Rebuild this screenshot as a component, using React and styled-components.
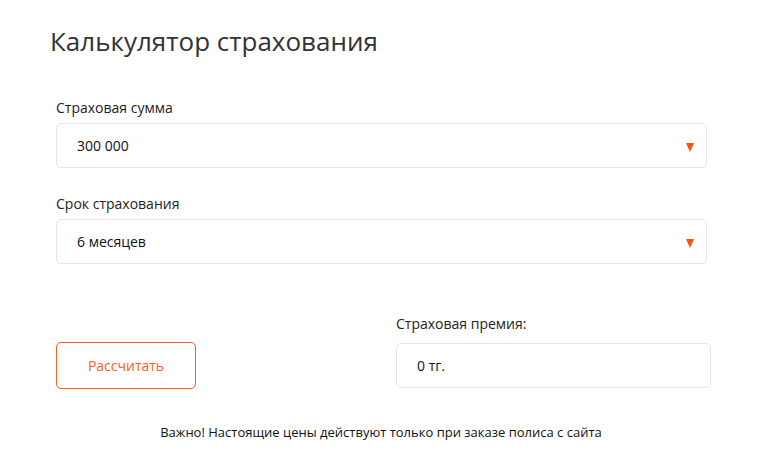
import React from "react";
import styled, { createGlobalStyle } from "styled-components";

const Global = createGlobalStyle`
  body { margin: 0; background: #fff; font-family: "Open Sans", "Noto Sans", sans-serif; color: #222; }
`;

const Page = styled.div`
  width: 782px;
  padding: 24px 0 0 50px;
  box-sizing: border-box;
`;

const Title = styled.h1`
  margin: 0 0 41px;
  font-size: 26px;
  font-weight: 400;
  color: #333;
  line-height: 34px;
`;

const Form = styled.div`
  padding-left: 6px;
  width: 651px;
  display: flex;
  flex-direction: column;
`;

const Field = styled.div`
  display: flex;
  flex-direction: column;
  gap: ${(p) => p.$gap || 6}px;
  margin-bottom: ${(p) => p.$mb || 0}px;
`;

const Label = styled.label`
  font-size: 14px;
  line-height: 18px;
  color: #222;
`;

const Select = styled.div`
  height: 45px;
  box-sizing: border-box;
  border: 1px solid #e6e6e6;
  border-radius: 5px;
  display: flex;
  align-items: center;
  justify-content: space-between;
  padding: 0 12px 0 20px;
  font-size: 14px;
  color: #111;
`;

const Arrow = styled.span`
  width: 0;
  height: 0;
  border-left: 4.5px solid transparent;
  border-right: 4.5px solid transparent;
  border-top: 9px solid #ff5500;
  margin-top: 4px;
`;

const Bottom = styled.div`
  display: flex;
  align-items: flex-end;
  justify-content: space-between;
  margin-top: 51px;
  width: 655px;
`;

const Button = styled.button`
  width: 140px;
  height: 47px;
  border: 1px solid #ff5a1a;
  border-radius: 5px;
  background: #fff;
  color: #ff5a1a;
  font-family: inherit;
  font-size: 14px;
  cursor: pointer;
  margin-bottom: -1px;
`;

const Result = styled.div`
  width: 315px;
  display: flex;
  flex-direction: column;
  gap: 10px;
`;

const ResultBox = styled.div`
  height: 45px;
  box-sizing: border-box;
  border: 1px solid #e6e6e6;
  border-radius: 5px;
  display: flex;
  align-items: center;
  padding-left: 20px;
  font-size: 14px;
  color: #111;
`;

const Note = styled.p`
  margin: 35px 0 0;
  width: 650px;
  text-align: center;
  font-size: 13px;
  line-height: 18px;
  color: #111;
`;

export default function App() {
  return (
    <Page>
      <Global />
      <Title>Калькулятор страхования</Title>
      <Form>
        <Field $mb={27}>
          <Label>Страховая сумма</Label>
          <Select>
            <span>300 000</span>
            <Arrow />
          </Select>
        </Field>
        <Field>
          <Label>Срок страхования</Label>
          <Select>
            <span>6 месяцев</span>
            <Arrow />
          </Select>
        </Field>
        <Bottom>
          <Button>Рассчитать</Button>
          <Result>
            <Label>Страховая премия:</Label>
            <ResultBox>0 тг.</ResultBox>
          </Result>
        </Bottom>
        <Note>Важно! Настоящие цены действуют только при заказе полиса с сайта</Note>
      </Form>
    </Page>
  );
}
